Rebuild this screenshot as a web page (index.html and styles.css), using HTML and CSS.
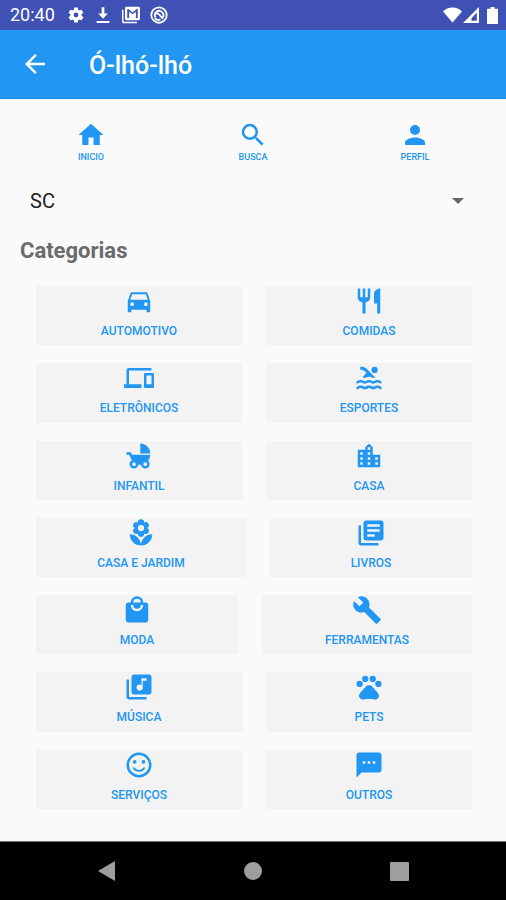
FILE: index.html
```html
<!DOCTYPE html>
<html lang="pt-BR">
<head>
<meta charset="utf-8">
<meta name="viewport" content="width=device-width, initial-scale=1">
<title>Ó-lhó-lhó</title>
<link rel="stylesheet" href="styles.css">
</head>
<body>
<div class="status">
  <span class="clock">20:40</span>
  <svg class="sicon" viewBox="0 0 24 24"><path d="M19.400 13c0-.3.1-.6.1-1s0-.7-.1-1l2.100-1.600c.2-.2.3-.4.1-.6l-2-3.500c-.1-.2-.4-.3-.6-.2l-2.500 1c-.5-.4-1.100-.7-1.700-1l-.4-2.600c0-.3-.2-.5-.4-.5h-4c-.3 0-.5.2-.5.4l-.4 2.700c-.6.2-1.100.6-1.700 1l-2.500-1c-.2-.1-.5 0-.6.2l-2 3.500c-.1.2-.1.4.1.6L4.500 11c0 .3-.1.600-.1 1s0 .7.1 1l-2.100 1.600c-.2.2-.3.4-.1.600l2 3.500c.1.2.4.3.6.2l2.500-1c.5.4 1.100.7 1.700 1l.4 2.600c0 .3.2.5.5.5h4c.2 0 .5-.2.5-.4l.4-2.700c.6-.2 1.100-.6 1.700-1l2.500 1c.2.1.5 0 .6-.2l2-3.500c.1-.2.1-.4-.1-.6zM12 15.200A3.200 3.200 0 1 1 12 8.800a3.200 3.200 0 0 1 0 6.400z"/></svg>
  <svg class="sicon" viewBox="0 0 24 24"><path d="M10.200 1.500h3.600V10h4.700L12 17 5.500 10h4.700zM3.500 20h17v2.600h-17z"/></svg>
  <svg class="sicon mail" viewBox="0 0 24 24"><path d="M2 5H0v16c0 1.100.9 2 2 2h18v-2H2zM22 1H6c-1.100 0-2 .9-2 2v14c0 1.100.9 2 2 2h16c1.100 0 2-.9 2-2V3c0-1.100-.9-2-2-2zm-1 15h-2.500V7.500L14 11 9.500 7.500V16H7V4h1.500L14 8.500 19.500 4H21z"/></svg>
  <svg class="sicon ring" viewBox="0 0 24 24"><circle cx="12" cy="12" r="10.300"/><path d="M7.600 15.500a5.600 5.600 0 1 1 9 .2M7.500 10.500c2-1.500 3.500-.5 4.500.8l5.500 6M6.500 16.500c2.500 2.500 5 2.500 7.500 1.500"/></svg>
  <span class="spacer"></span>
  <svg class="wifi" viewBox="0 0 20 16"><path d="M10 16L0 4.200C2.500 1.700 6 0 10 0s7.500 1.700 10 4.200z"/></svg>
  <svg class="signal" viewBox="0 0 16 16"><path d="M16 0v16H0zM13.800 5.500L8.500 11.200v2.600h5.300z" fill-rule="evenodd"/></svg>
  <svg class="battery" viewBox="0 0 11 17"><path d="M3.500 0h4v1.700H10c.6 0 1 .4 1 1V16c0 .6-.4 1-1 1H1c-.6 0-1-.4-1-1V2.700c0-.6.4-1 1-1h2.500z"/></svg>
</div>
<header class="appbar">
  <button class="back" type="button" aria-label="Voltar"><svg class="icon" viewBox="0 0 24 24"><path d="M20 11H7.830l5.590-5.590L12 4l-8 8 8 8 1.410-1.410L7.830 13H20z"/></svg></button>
  <h1>Ó-lhó-lhó</h1>
</header>
<main>
  <nav class="tabs">
    <a href="#inicio"><svg class="icon" viewBox="0 0 24 24"><path d="M10 20v-6h4v6h5v-8h3L12 3 2 12h3v8z"/></svg>INICIO</a>
    <a href="#busca"><svg class="icon" viewBox="0 0 24 24"><path d="M15.500 14h-.79l-.28-.27A6.470 6.470 0 0 0 16 9.500 6.500 6.500 0 1 0 9.500 16c1.610 0 3.090-.59 4.230-1.570l.27.28v.79l5 4.990L20.490 19zm-6 0a4.500 4.500 0 1 1 0-9 4.500 4.500 0 0 1 0 9z"/></svg>BUSCA</a>
    <a href="#perfil"><svg class="icon" viewBox="0 0 24 24"><path d="M12 12a4 4 0 1 0 0-8 4 4 0 0 0 0 8zm0 2c-2.670 0-8 1.340-8 4v2h16v-2c0-2.660-5.330-4-8-4z"/></svg>PERFIL</a>
  </nav>
  <div class="state">
    <select aria-label="Estado"><option>SC</option></select>
    <svg class="caret" viewBox="0 0 12 6"><path d="M0 0h12L6 6z"/></svg>
  </div>
  <h2>Categorias</h2>
  <div class="categories">
    <div class="row">
      <button type="button"><svg class="icon" viewBox="0 0 24 24"><path d="M18.920 6.010C18.720 5.420 18.160 5 17.500 5h-11c-.66 0-1.210.42-1.420 1.010L3 12v8c0 .55.45 1 1 1h1c.55 0 1-.45 1-1v-1h12v1c0 .55.45 1 1 1h1c.55 0 1-.45 1-1v-8zM6.500 16a1.500 1.500 0 1 1 0-3 1.500 1.500 0 0 1 0 3zm11 0a1.500 1.500 0 1 1 0-3 1.500 1.500 0 0 1 0 3zM5 11l1.500-4.500h11L19 11z"/></svg>AUTOMOTIVO</button>
      <button type="button"><svg class="icon" viewBox="0 0 24 24"><path d="M11 9H9V2H7v7H5V2H3v7c0 2.120 1.660 3.840 3.750 3.970V22h2.500v-9.030C11.340 12.840 13 11.120 13 9V2h-2zm5-3v8h2.500v8H21V2c-2.760 0-5 2.240-5 4z"/></svg>COMIDAS</button>
    </div>
    <div class="row">
      <button type="button"><svg class="icon" viewBox="0 0 24 24"><path d="M4 6h18V4H4c-1.100 0-2 .9-2 2v11H0v3h14v-3H4zm19 2h-6c-.55 0-1 .45-1 1v10c0 .55.45 1 1 1h6c.55 0 1-.45 1-1V9c0-.55-.45-1-1-1zm-1 9h-4v-7h4z"/></svg>ELETRÔNICOS</button>
      <button type="button"><svg class="icon" viewBox="0 0 24 24"><path d="M22 21c-1.110 0-1.730-.37-2.180-.64-.37-.22-.6-.36-1.150-.36-.56 0-.78.13-1.150.36-.46.27-1.070.64-2.180.64s-1.730-.37-2.180-.64c-.37-.22-.6-.36-1.150-.36-.56 0-.78.13-1.150.36-.46.27-1.080.64-2.190.64-1.110 0-1.730-.37-2.180-.64-.37-.23-.6-.36-1.150-.36s-.78.13-1.150.36c-.46.27-1.080.64-2.190.64v-2c.56 0 .78-.13 1.150-.36.46-.27 1.080-.64 2.190-.64s1.730.37 2.180.64c.37.23.59.36 1.150.36.56 0 .78-.13 1.150-.36.46-.27 1.080-.64 2.190-.64 1.110 0 1.730.37 2.180.64.37.22.6.36 1.150.36s.78-.13 1.150-.36c.45-.27 1.070-.64 2.180-.64s1.730.37 2.180.64c.37.23.59.36 1.150.36zm0-4.500c-1.110 0-1.730-.37-2.180-.64-.37-.22-.6-.36-1.150-.36-.56 0-.78.13-1.150.36-.45.27-1.070.64-2.180.64s-1.730-.37-2.180-.64c-.37-.22-.6-.36-1.150-.36-.56 0-.78.13-1.150.36-.45.27-1.070.64-2.180.64s-1.730-.37-2.180-.64c-.37-.22-.6-.36-1.150-.36s-.78.13-1.150.36c-.47.27-1.090.64-2.200.64v-2c.56 0 .78-.13 1.150-.36.45-.27 1.070-.64 2.180-.64s1.730.37 2.180.64c.37.22.6.36 1.150.36.56 0 .78-.13 1.150-.36.45-.27 1.070-.64 2.180-.64s1.730.37 2.180.64c.37.22.6.36 1.150.36s.78-.13 1.150-.36c.45-.27 1.070-.64 2.180-.64s1.730.37 2.180.64c.37.22.6.36 1.150.36zM8.670 12c.56 0 .78-.13 1.150-.36.46-.27 1.080-.64 2.190-.64 1.110 0 1.730.37 2.180.64.37.22.6.36 1.150.36s.78-.13 1.150-.36c.12-.07.26-.15.41-.23L10.480 5C8.930 3.450 7.500 2.990 5 3v2.500c1.820-.01 2.890.39 4 1.500l1 1-3.250 3.250c.31.12.56.27.77.39.37.23.59.36 1.150.36z"/><circle cx="16.500" cy="5.500" r="2.500"/></svg>ESPORTES</button>
    </div>
    <div class="row">
      <button type="button"><svg class="icon" viewBox="0 0 24 24"><path d="M13 2v8h8c0-4.420-3.580-8-8-8zm6.320 13.890A7.948 7.948 0 0 0 21 11H6.440l-.95-2H2v2h2.220s1.890 4.070 2.120 4.420A3.492 3.492 0 0 0 8 22c1.760 0 3.220-1.300 3.460-3h2.080a3.499 3.499 0 1 0 5.780-3.110zM8 20a1.500 1.500 0 1 1 0-3 1.500 1.500 0 0 1 0 3zm9 0a1.500 1.500 0 1 1 0-3 1.500 1.500 0 0 1 0 3z"/></svg>INFANTIL</button>
      <button type="button"><svg class="icon" viewBox="0 0 24 24"><path d="M15 11V5l-3-3-3 3v2H3v14h18V11zm-8 8H5v-2h2zm0-4H5v-2h2zm0-4H5V9h2zm6 8h-2v-2h2zm0-4h-2v-2h2zm0-4h-2V9h2zm0-4h-2V5h2zm6 12h-2v-2h2zm0-4h-2v-2h2z"/></svg>CASA</button>
    </div>
    <div class="row">
      <button class="wide" type="button"><svg class="icon" viewBox="0 0 24 24"><path d="M12 22a9 9 0 0 0 9-9 9 9 0 0 0-9 9zM5.600 10.250a2.500 2.500 0 0 0 3.920 2.060l-.02.19a2.500 2.500 0 0 0 5 0l-.02-.19c.4.280.89.44 1.420.44a2.500 2.500 0 0 0 2.500-2.500c0-1-.59-1.850-1.430-2.250.84-.4 1.430-1.250 1.430-2.250a2.500 2.500 0 0 0-3.920-2.060l.02-.19a2.500 2.500 0 0 0-5 0l.02.19A2.500 2.500 0 0 0 5.600 5.750c0 1 .59 1.850 1.430 2.250-.84.4-1.430 1.250-1.430 2.250zM12 5.500a2.500 2.500 0 1 1 0 5 2.500 2.500 0 0 1 0-5zM3 13a9 9 0 0 0 9 9 9 9 0 0 0-9-9z"/></svg>CASA E JARDIM</button>
      <button type="button"><svg class="icon" viewBox="0 0 24 24"><path d="M4 6H2v14c0 1.100.9 2 2 2h14v-2H4zm16-4H8c-1.100 0-2 .9-2 2v12c0 1.100.9 2 2 2h12c1.100 0 2-.9 2-2V4c0-1.100-.9-2-2-2zm-1 9H9V9h10zm-4 4H9v-2h6zm4-8H9V5h10z"/></svg>LIVROS</button>
    </div>
    <div class="row">
      <button type="button"><svg class="icon" viewBox="0 0 24 24"><path d="M19 6h-2A5 5 0 0 0 7 6H5c-1.100 0-1.990.9-1.990 2L3 20c0 1.100.9 2 2 2h14c1.100 0 2-.9 2-2V8c0-1.100-.9-2-2-2zm-7-3a3 3 0 0 1 3 3H9a3 3 0 0 1 3-3zm0 10a5 5 0 0 1-5-5h2a3 3 0 0 0 6 0h2a5 5 0 0 1-5 5z"/></svg>MODA</button>
      <button class="wide" type="button"><svg class="icon" viewBox="0 0 24 24"><path d="M22.700 19l-9.100-9.100c.9-2.300.4-5-1.500-6.900-2-2-5-2.400-7.400-1.300L9 6 6 9 1.600 4.700C.4 7.100.9 10.100 2.900 12.100c1.900 1.900 4.600 2.400 6.900 1.500l9.100 9.100c.4.4 1 .4 1.400 0l2.300-2.300c.5-.4.5-1.100.1-1.400z"/></svg>FERRAMENTAS</button>
    </div>
    <div class="row">
      <button type="button"><svg class="icon" viewBox="0 0 24 24"><path d="M20 2H8c-1.100 0-2 .9-2 2v12c0 1.100.9 2 2 2h12c1.100 0 2-.9 2-2V4c0-1.100-.9-2-2-2zm-2 5h-3v5.500a2.500 2.500 0 1 1-1-2V5h4zM4 6H2v14c0 1.100.9 2 2 2h14v-2H4z"/></svg>MÚSICA</button>
      <button type="button"><svg class="icon" viewBox="0 0 24 24"><circle cx="4.500" cy="9.500" r="2.500"/><circle cx="9" cy="5.500" r="2.500"/><circle cx="15" cy="5.500" r="2.500"/><circle cx="19.500" cy="9.500" r="2.500"/><path d="M17.340 14.860c-.87-1.020-1.600-1.890-2.480-2.910-.46-.54-1.050-1.080-1.750-1.320-.36-.13-.73-.13-1.110-.13s-.75 0-1.110.13c-.7.24-1.280.78-1.750 1.320-.87 1.020-1.600 1.890-2.480 2.910-1.310 1.310-2.920 2.760-2.620 4.790.29 1.020 1.020 2.030 2.330 2.320.73.15 3.060-.44 5.540-.44h.18c2.480 0 4.810.58 5.540.44 1.310-.29 2.040-1.310 2.330-2.320.31-2.040-1.300-3.490-2.620-4.790z"/></svg>PETS</button>
    </div>
    <div class="row">
      <button type="button"><svg class="icon" viewBox="0 0 24 24"><path d="M12 2a10 10 0 1 0 0 20 10 10 0 0 0 0-20zm0 18a8 8 0 1 1 0-16 8 8 0 0 1 0 16zm0-4c-1.480 0-2.750-.81-3.450-2H6.880a5.495 5.495 0 0 0 10.240 0h-1.670c-.7 1.190-1.970 2-3.450 2z"/><circle cx="8.500" cy="9.500" r="1.500"/><circle cx="15.500" cy="9.500" r="1.500"/></svg>SERVIÇOS</button>
      <button type="button"><svg class="icon" viewBox="0 0 24 24"><path d="M20 2H4c-1.100 0-1.990.9-1.990 2L2 22l4-4h14c1.100 0 2-.9 2-2V4c0-1.100-.9-2-2-2zM9 11H7V9h2zm4 0h-2V9h2zm4 0h-2V9h2z"/></svg>OUTROS</button>
    </div>
  </div>
</main>
<footer class="navbar">
  <button type="button" aria-label="Voltar"><svg viewBox="0 0 20 20"><path d="M1 10L18 0v20z"/></svg></button>
  <button type="button" aria-label="Início"><svg viewBox="0 0 20 20"><circle cx="10" cy="10" r="9"/></svg></button>
  <button type="button" aria-label="Recentes"><svg viewBox="0 0 20 20"><rect x="1" y="1" width="19" height="19" rx="1"/></svg></button>
</footer>
</body>
</html>
```
FILE: styles.css
```css
* {
  box-sizing: border-box;
}

body {
  margin: 0;
  min-height: 100vh;
  display: flex;
  flex-direction: column;
  background: #fafafa;
  font-family: Roboto, "Liberation Sans", sans-serif;
}

button,
select {
  margin: 0;
  padding: 0;
  border: 0;
  background: none;
  font: inherit;
  color: inherit;
}

svg {
  display: block;
  flex: none;
  fill: currentColor;
}

h1,
h2 {
  margin: 0;
  font-weight: 500;
}

.icon {
  width: 30px;
  height: 30px;
}

.status {
  display: flex;
  align-items: center;
  height: 30px;
  padding: 0 8px 0 10px;
  background: #3f51b5;
  color: #fff;
}

.clock {
  margin-right: 12px;
  font-size: 18px;
  line-height: 30px;
}

.sicon {
  width: 18px;
  height: 18px;
  margin-right: 9px;
}

.mail {
  width: 20px;
}

.ring {
  fill: none;
  stroke: currentColor;
  stroke-width: 2.4;
}

.spacer {
  flex: 1;
}

.wifi {
  width: 19px;
  height: 16px;
}

.signal {
  width: 16px;
  height: 16px;
  margin: 0 8px 0 1px;
}

.battery {
  width: 11px;
  height: 17px;
}

.appbar {
  display: flex;
  align-items: center;
  gap: 39px;
  height: 69px;
  padding: 0 20px;
  background: #2196f3;
  color: #fff;
  border-bottom: 1px solid #1588ea;
}

.appbar h1 {
  padding-top: 4px;
  font-size: 25px;
  line-height: 32px;
}

main {
  flex: 1;
  display: flex;
  flex-direction: column;
  padding-bottom: 32px;
}

.tabs {
  display: grid;
  grid-template-columns: repeat(3, 1fr);
  padding: 21px 10px 0;
}

.tabs a {
  display: flex;
  flex-direction: column;
  align-items: center;
  color: #2196f3;
  font-size: 9px;
  font-weight: 500;
  line-height: 14px;
  text-decoration: none;
}

.state {
  display: grid;
  align-items: center;
  margin-top: 17px;
  padding: 0 42px 0 30px;
}

.state select,
.caret {
  grid-area: 1 / 1;
}

.state select {
  width: 100%;
  height: 40px;
  appearance: none;
  font-size: 20px;
  color: #212121;
}

.caret {
  justify-self: end;
  width: 12px;
  height: 6px;
  color: #666;
  pointer-events: none;
}

h2 {
  margin-top: 15px;
  padding: 0 20px;
  font-size: 22px;
  font-weight: 700;
  line-height: 30px;
  color: #6b6b6b;
}

.categories {
  flex: 1;
  display: flex;
  flex-direction: column;
  gap: 18px;
  margin-top: 20px;
  padding: 0 34px 0 36px;
}

.row {
  flex: 1 0 56px;
  display: flex;
  gap: 24px;
}

.row button {
  flex: 1 1 100px;
  display: flex;
  flex-direction: column;
  align-items: center;
  gap: 6px;
  background: #f3f3f3;
  color: #2196f3;
  font-size: 12px;
  font-weight: 500;
  line-height: 18px;
}

.row .wide {
  flex-basis: 108px;
}

.navbar {
  display: grid;
  grid-template-columns: repeat(3, 1fr);
  height: 59px;
  padding: 0 34px;
  border-top: 1px solid #777;
  background: #000;
  color: #9e9e9e;
}

.navbar button {
  display: grid;
  place-items: center;
}

.navbar svg {
  width: 20px;
  height: 20px;
}
```
